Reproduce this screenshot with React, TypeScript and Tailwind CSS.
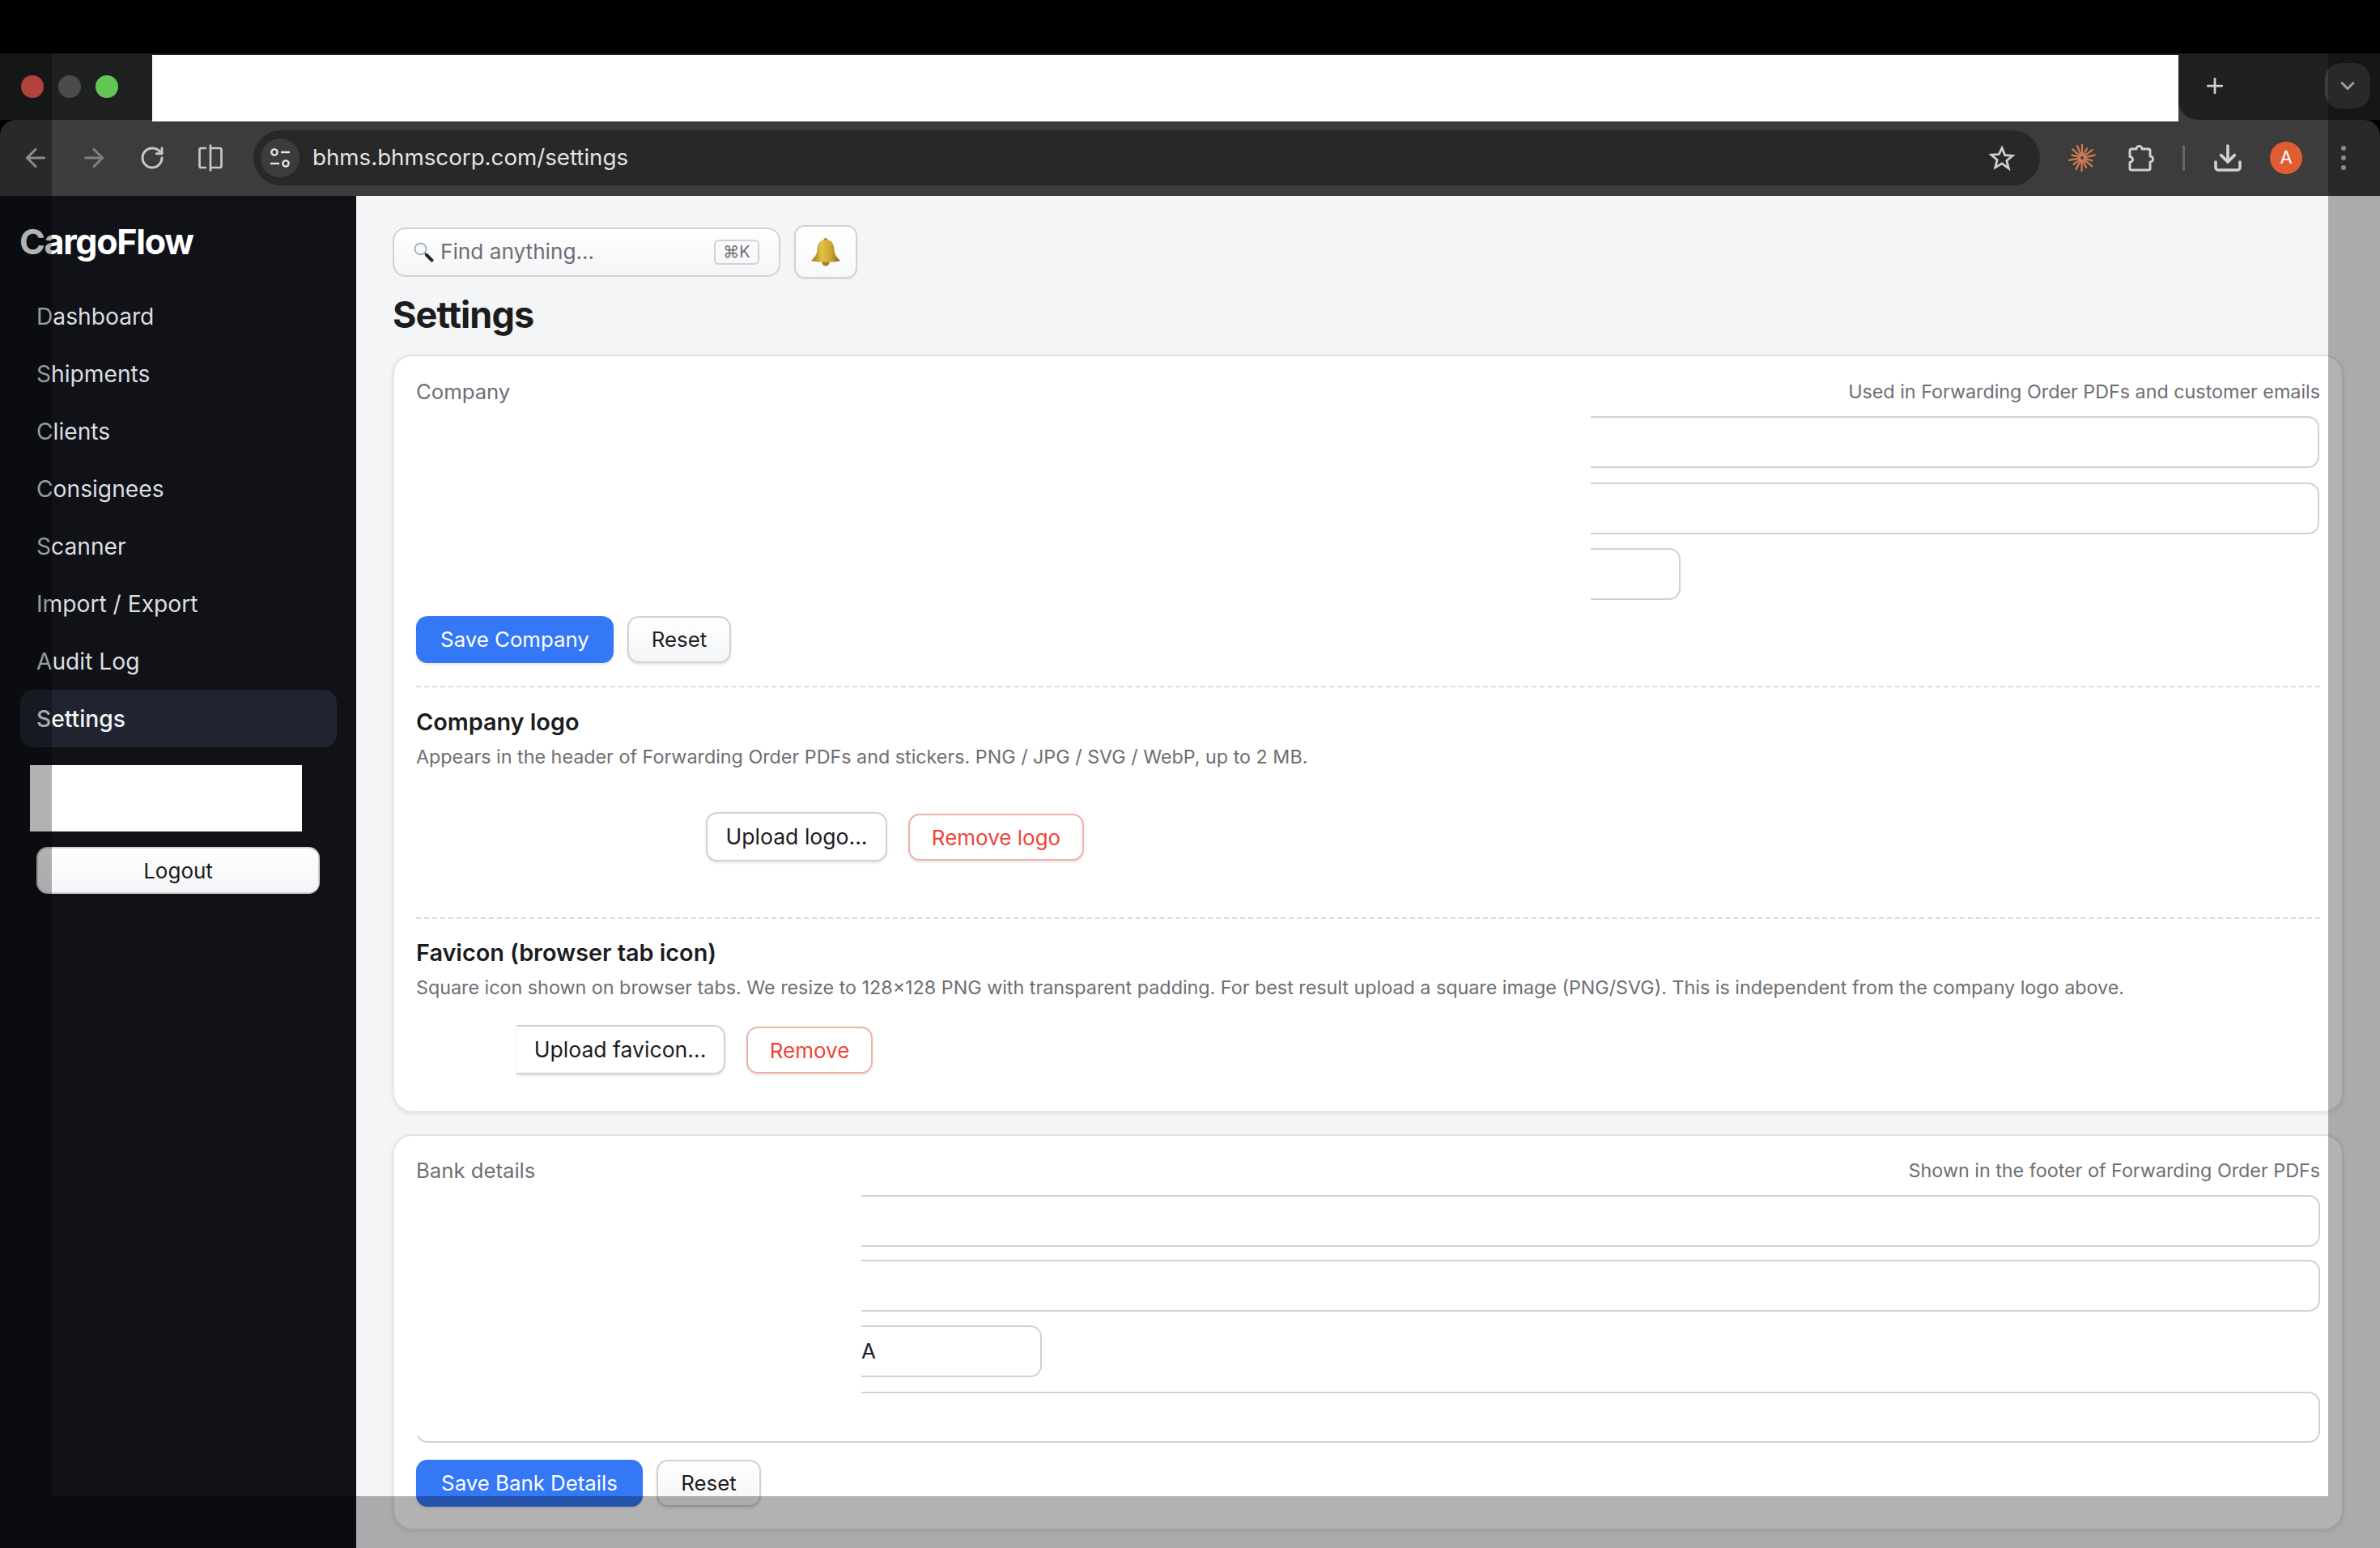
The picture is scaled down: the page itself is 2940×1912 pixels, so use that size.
import { ArrowLeft, ArrowRight, ChevronDown, Download, Plus, RotateCw } from 'lucide-react';

const navItems = ['Dashboard', 'Shipments', 'Clients', 'Consignees', 'Scanner', 'Import / Export', 'Audit Log', 'Settings'];

const inter = "font-['Inter','Noto_Sans',sans-serif]";

function SplitIcon() {
  return (
    <svg width="32" height="34" viewBox="0 0 32 34" fill="none" stroke="currentColor" strokeWidth="2.7">
      <path d="M11 5H4.500a2 2 0 0 0-2 2v20a2 2 0 0 0 2 2H11" />
      <path d="M16 0.500v33" />
      <path d="M16 5h11.500a2 2 0 0 1 2 2v20a2 2 0 0 1-2 2H16" />
    </svg>
  );
}

function SiteIcon() {
  return (
    <svg width="26" height="26" viewBox="0 0 26 26" fill="none" stroke="#e3e3e3" strokeWidth="2.4">
      <circle cx="6" cy="6" r="3.600" />
      <path d="M14 6h11" />
      <path d="M1 20h11" />
      <circle cx="20" cy="20" r="3.600" />
    </svg>
  );
}

function StarIcon() {
  return (
    <svg width="32" height="32" viewBox="0 0 30 30" fill="none" stroke="#d0d0d0" strokeWidth="2.6">
      <path d="M15 3.500l3.400 8.300 9 .7-6.900 5.800 2.200 8.800L15 21.400l-7.700 4.700 2.200-8.800-6.900-5.800 9-.7z" />
    </svg>
  );
}

function ClaudeIcon() {
  const rays = [0, 27, 52, 78, 105, 130, 157, 182, 208, 233, 260, 285, 312, 338];
  return (
    <svg width="34" height="34" viewBox="-17 -17 34 34" stroke="#d07a56" strokeWidth="2.3" strokeLinecap="round">
      {rays.map((a) => (
        <line key={a} x1="0" y1="-3" x2="0" y2={a % 2 === 0 ? -16 : -13} transform={`rotate(${a})`} />
      ))}
    </svg>
  );
}

function PuzzleIcon() {
  return (
    <svg width="34" height="34" viewBox="0 0 34 34" fill="none" stroke="#cfcfcf" strokeWidth="3" strokeLinejoin="round">
      <path d="M4 6h7a3.500 3.500 0 0 1 7 0h8a2 2 0 0 1 2 2v7a3.500 3.500 0 0 1 0 7v8a2 2 0 0 1-2 2H5a2 2 0 0 1-2-2v-7.500a3.500 3.500 0 0 0 0-7V8a2 2 0 0 1 1-2z" />
    </svg>
  );
}

function LensIcon() {
  return (
    <svg width="25" height="25" viewBox="0 0 25 25">
      <circle cx="8.500" cy="8.500" r="7" fill="#f5f8fb" stroke="#9aa4ae" strokeWidth="1.600" />
      <path d="M13.500 13.500l2 2" stroke="#6b6b6b" strokeWidth="2" />
      <path d="M16 16l6.500 6.500" stroke="#26262a" strokeWidth="4" strokeLinecap="round" />
    </svg>
  );
}

function BellIcon() {
  return (
    <svg width="38" height="36" viewBox="0 0 38 36">
      <defs>
        <linearGradient id="bellGold" x1="0" y1="0" x2="1" y2="0">
          <stop offset="0" stopColor="#8f6c12" />
          <stop offset="0.35" stopColor="#e2c24a" />
          <stop offset="0.7" stopColor="#c9a32e" />
          <stop offset="1" stopColor="#7d5c10" />
        </linearGradient>
      </defs>
      <circle cx="19" cy="31" r="4.500" fill="#a87c1c" />
      <circle cx="19" cy="3.500" r="2.500" fill="#a8851f" />
      <path d="M19 3C11 3 9 9 8.500 15.500 8 21.500 5 25.500 1 29c8 2.500 28 2.500 36 0-4-3.500-7-7.500-7.500-13.500C29 9 27 3 19 3z" fill="url(#bellGold)" />
    </svg>
  );
}

function Input({ width, children }: { width: string; children?: React.ReactNode }) {
  return (
    <div className={`h-[64px] ${width} overflow-hidden rounded-r-[14px] border-y-[2px] border-r-[2px] border-[#d1d1d6] bg-white text-[26px] leading-[60px] text-[#1c1c1e]`}>
      {children}
    </div>
  );
}

function Button({ children, className }: { children: React.ReactNode; className: string }) {
  return (
    <button className={`flex h-[58px] items-center justify-center rounded-[14px] pt-[1px] text-[25.800px] shadow-[0_2px_3px_rgba(0,0,0,0.1)] ${className}`}>
      {children}
    </button>
  );
}

const ghost = 'border-[2px] border-[#d1d1d6] bg-gradient-to-b from-white to-[#f4f5f7] text-[#1c1c1e]';
const primary = 'bg-[#3478f6] text-white';
const danger = 'border-[2px] border-[#f0b1ac] bg-white text-[#f04438]';

function CardHeader({ title, note }: { title: string; note: string }) {
  return (
    <div className="flex h-[48px] items-center justify-between text-[23.300px] text-[#6e6e73]">
      <span className="text-[25.700px]">{title}</span>
      <span>{note}</span>
    </div>
  );
}

export default function App() {
  return (
    <div className={`relative flex h-[1912px] w-[2940px] flex-col overflow-hidden bg-black ${inter}`}>
      {/* browser chrome */}
      <div className="mt-[66px] flex h-[82px] shrink-0 bg-[#1f2120]">
        <div className="flex w-[188px] items-center gap-[18px] pl-[26px]">
          <span className="h-[28px] w-[28px] rounded-full bg-[#ff5f57]" />
          <span className="h-[28px] w-[28px] rounded-full bg-[#4a4b4b]" />
          <span className="h-[28px] w-[28px] rounded-full bg-[#62c554]" />
        </div>
        <div className="relative z-20 mt-[2px] h-[82px] w-[2503px] bg-white" />
        <div className="flex-1 bg-[#3c3c3c]">
          <div className="flex h-[82px] items-center rounded-bl-[24px] bg-[#1f2120] pb-[2px]">
            <Plus className="ml-[30px] text-[#d0d0d0]" size={30} strokeWidth={2.2} />
            <div className="ml-[121px] flex h-[56px] w-[56px] items-center justify-center rounded-[20px] bg-[#3c3c3c]">
              <ChevronDown className="text-[#e3e3e3]" size={28} strokeWidth={2.6} />
            </div>
          </div>
        </div>
      </div>
      <div className="z-10 flex h-[94px] shrink-0 items-center rounded-t-[20px] bg-[#3c3c3c] pb-[1px] text-[#c7c7c7]">
        <ArrowLeft className="ml-[26px] text-[#c7c7c7]" size={36} strokeWidth={2.1} />
        <ArrowRight className="ml-[36px] text-[#808080]" size={36} strokeWidth={2.1} />
        <RotateCw className="ml-[38px]" size={32} strokeWidth={2.2} />
        <div className="ml-[40px]"><SplitIcon /></div>
        <div className="ml-[37px] flex h-[68px] w-[2207px] items-center rounded-full bg-[#282828] pl-[9px] pr-[31px]">
          <div className="flex h-[48px] w-[48px] items-center justify-center rounded-full bg-[#3c3c3c]">
            <SiteIcon />
          </div>
          <span className="ml-[16px] flex-1 text-[27.700px] text-[#e3e3e3]">bhms.bhmscorp.com/settings</span>
          <StarIcon />
        </div>
        <div className="ml-[35px]"><ClaudeIcon /></div>
        <div className="ml-[39px]"><PuzzleIcon /></div>
        <div className="ml-[34px] h-[32px] w-[3px] rounded bg-[#666]" />
        <Download className="ml-[33px] text-[#cfcfcf]" size={40} strokeWidth={2.2} />
        <div className="ml-[32px] flex h-[40px] w-[40px] items-center justify-center rounded-full bg-[#e05d34] text-[22px] text-white">A</div>
        <div className="ml-[48px] flex flex-col gap-[6px]">
          <span className="h-[6px] w-[6px] rounded-full bg-[#c7c7c7]" />
          <span className="h-[6px] w-[6px] rounded-full bg-[#c7c7c7]" />
          <span className="h-[6px] w-[6px] rounded-full bg-[#c7c7c7]" />
        </div>
      </div>

      {/* page */}
      <div className="flex min-h-0 flex-1">
        <aside className="w-[440px] shrink-0 bg-[#101217] pl-[25px] pr-[24px] pt-[27px]">
          <div className="-ml-[1px] h-[86px] text-[43px] font-bold leading-[58px] tracking-[-0.03em] text-white">CargoFlow</div>
          <nav className="flex flex-col">
            {navItems.map((item) => (
              <div key={item} className={`flex h-[71px] items-center rounded-[16px] pl-[20px] pt-[1px] text-[28.200px] ${item === 'Settings' ? 'bg-[#1f2430] font-medium text-[#f3f4f6]' : 'text-[#dcdee2]'}`}>
                {item}
              </div>
            ))}
          </nav>
          <div className="ml-[12px] mt-[22px] h-[82px] w-[336px] bg-white" />
          <button className={`ml-[20px] mt-[19px] flex h-[58px] w-[350px] items-center justify-center rounded-[14px] text-[26px] ${ghost}`}>
            Logout
          </button>
        </aside>

        <main className="flex-1 bg-[#f4f5f7] pl-[45px] pt-[36px]">
          <div className="flex items-center gap-[17px]">
            <div className="flex h-[61px] w-[479px] items-center rounded-[16px] border-[2px] border-[#d1d1d6] bg-gradient-to-b from-white to-[#f4f5f7] pl-[24px] pr-[24px] text-[26.200px] text-[#6e6e73]">
              <LensIcon />
              <span className="ml-[8px] flex-1">Find anything...</span>
              <span className="flex h-[31px] w-[56px] items-center justify-center rounded-[6px] border-[2px] border-[#d1d1d6] text-[20px]">⌘K</span>
            </div>
            <div className="flex h-[66px] w-[78px] items-center justify-center rounded-[13px] border-[2px] border-[#d1d1d6] bg-gradient-to-b from-white to-[#f9f9fb] shadow-[0_1px_2px_rgba(0,0,0,0.08)]">
              <BellIcon />
            </div>
          </div>
          <h1 className="mt-[16px] text-[45px] font-bold leading-[58px] tracking-[-0.02em] text-[#1c1c1e]">Settings</h1>

          <section className="mt-[20px] h-[936px] w-[2410px] rounded-[24px] border-[2px] border-[#e3e4e8] bg-white px-[27px] pt-[20px] shadow-[0_2px_6px_rgba(0,0,0,0.08)]">
            <CardHeader title="Company" note="Used in Forwarding Order PDFs and customer emails" />
            <div className="flex flex-col items-start pl-[1451px]">
              <div className="mt-[6px]"><Input width="w-[900px]" /></div>
              <div className="mt-[18px]"><Input width="w-[900px]" /></div>
              <div className="mt-[17px]"><Input width="w-[111px]" /></div>
            </div>
            <div className="mt-[20px] flex gap-[17px]">
              <Button className={`w-[244px] ${primary}`}>Save Company</Button>
              <Button className={`w-[128px] ${ghost}`}>Reset</Button>
            </div>
            <div className="mt-[28px] border-t-[2px] border-dashed border-[#dcdce0]" />
            <h2 className="mt-[23px] text-[28.800px] font-semibold leading-[40px] text-[#1c1c1e]">Company logo</h2>
            <p className="mt-[5px] text-[23.300px] leading-[36px] text-[#6e6e73]">Appears in the header of Forwarding Order PDFs and stickers. PNG / JPG / SVG / WebP, up to 2 MB.</p>
            <div className="mt-[50px] flex items-center pl-[358px]">
              <Button className="h-[61px] w-[224px] border-[2px] border-[#d1d1d6] bg-white !text-[26.600px] text-[#1c1c1e]">Upload logo...</Button>
              <Button className={`ml-[26px] w-[217px] !text-[26px] ${danger}`}>Remove logo</Button>
            </div>
            <div className="mt-[69px] border-t-[2px] border-dashed border-[#dcdce0]" />
            <h2 className="mt-[22px] text-[28.800px] font-semibold leading-[40px] text-[#1c1c1e]">Favicon (browser tab icon)</h2>
            <p className="mt-[5px] text-[23.300px] leading-[36px] text-[#6e6e73]">Square icon shown on browser tabs. We resize to 128×128 PNG with transparent padding. For best result upload a square image (PNG/SVG). This is independent from the company logo above.</p>
            <div className="mt-[28px] flex items-center pl-[124px]">
              <Button className="h-[61px] w-[258px] rounded-l-none border-y-[2px] border-r-[2px] border-[#d1d1d6] bg-white !text-[26.600px] text-[#1c1c1e]">Upload favicon...</Button>
              <Button className={`ml-[26px] w-[156px] !text-[26px] ${danger}`}>Remove</Button>
            </div>
          </section>

          <section className="mt-[27px] h-[489px] w-[2410px] rounded-[24px] border-[2px] border-[#e3e4e8] bg-white px-[27px] pt-[19px] shadow-[0_2px_6px_rgba(0,0,0,0.08)]">
            <CardHeader title="Bank details" note="Shown in the footer of Forwarding Order PDFs" />
            <div className="flex flex-col items-start pl-[550px]">
              <div className="mt-[6px]"><Input width="w-[1802px]" /></div>
              <div className="mt-[16px]"><Input width="w-[1802px]" /></div>
              <div className="mt-[17px]"><Input width="w-[223px]"><span className="block">A</span></Input></div>
            </div>
            <div className="relative mt-[18px] h-[63px] rounded-[14px] border-[2px] border-[#d1d1d6] bg-white">
              <div className="absolute -left-[2px] -top-[2px] h-[54px] w-[550px] bg-white" />
            </div>
            <div className="mt-[21px] flex gap-[17px]">
              <Button className={`w-[280px] ${primary}`}>Save Bank Details</Button>
              <Button className={`w-[129px] ${ghost}`}>Reset</Button>
            </div>
          </section>
        </main>
      </div>

      {/* dimmed screen area around the capture */}
      <div className="pointer-events-none absolute left-0 top-[66px] z-30 h-[1846px] w-[64px] bg-black/30" />
      <div className="pointer-events-none absolute right-0 top-[66px] z-30 h-[1846px] w-[64px] bg-black/30" />
      <div className="pointer-events-none absolute bottom-0 left-[64px] z-30 h-[64px] w-[2812px] bg-black/30" />
    </div>
  );
}
